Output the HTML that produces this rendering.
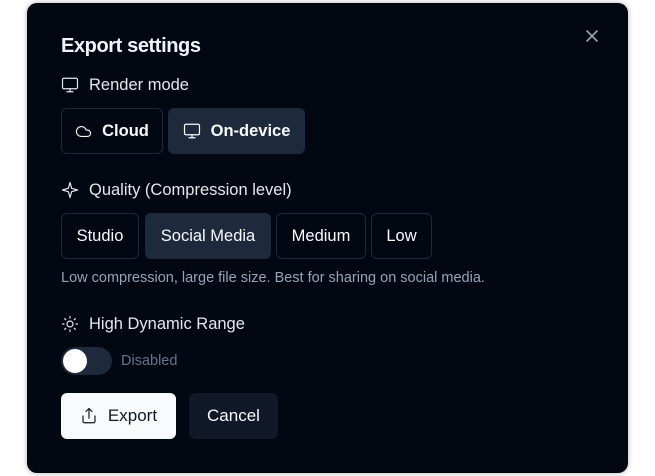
<!DOCTYPE html><html><head><style>
body{margin:0;width:655px;height:476px;background:#fff;font-family:"Liberation Sans",sans-serif;position:relative;overflow:hidden}
.p{position:absolute;left:27px;top:3px;width:601px;height:470px;background:#030712;border-radius:10px;box-shadow:0 0 6px rgba(0,0,0,.3)}
.a{position:absolute}
.t{color:#f1f5f9;font-size:20px;font-weight:bold;letter-spacing:-0.4px}
.l{color:#e5e7eb;font-size:16.5px}
.b{position:absolute;box-sizing:border-box;border:1px solid #1e293b;border-radius:6px;color:#f8fafc;font-size:16.5px;font-weight:bold;display:flex;align-items:center;justify-content:center;gap:10px}
.s{background:#1e293b}
svg{fill:none;stroke:currentColor;stroke-width:1.6;stroke-linecap:round;stroke-linejoin:round}
</style></head><body>
<div class="p"></div>
<div class="a t" style="left:61px;top:35px">Export settings</div>
<svg class="a" style="left:584px;top:28px;color:#9ca3af" width="16" height="16" viewBox="0 0 16 16"><path d="M3 3l10 10M13 3L3 13"/></svg>
<svg class="a" style="left:61px;top:76px;color:#e5e7eb" width="18" height="18" viewBox="0 0 24 24"><rect x="2" y="3" width="20" height="14" rx="2"/><path d="M8 21h8M12 17v4"/></svg>
<div class="a l" style="left:89px;top:76px">Render mode</div>
<div class="b" style="left:61px;top:108px;width:102px;height:46px"><svg width="17" height="17" viewBox="0 0 24 24"><path d="M17.5 19H9a7 7 0 1 1 6.7-9h1.8a4.5 4.5 0 1 1 0 9z"/></svg>Cloud</div>
<div class="b s" style="left:168px;top:108px;width:137px;height:46px"><svg width="18" height="18" viewBox="0 0 24 24"><rect x="2" y="3" width="20" height="14" rx="2"/><path d="M8 21h8M12 17v4"/></svg>On-device</div>
<svg class="a" style="left:61px;top:181px;color:#e5e7eb" width="18" height="18" viewBox="0 0 24 24"><path d="M12 2l2.2 7.8L22 12l-7.8 2.2L12 22l-2.2-7.8L2 12l7.8-2.2z"/></svg>
<div class="a l" style="left:89px;top:181px">Quality (Compression level)</div>
<div class="b" style="left:61px;top:213px;width:78px;height:46px;font-weight:normal">Studio</div>
<div class="b s" style="left:145px;top:213px;width:126px;height:46px;font-weight:normal">Social Media</div>
<div class="b" style="left:276px;top:213px;width:90px;height:46px;font-weight:normal">Medium</div>
<div class="b" style="left:371px;top:213px;width:61px;height:46px;font-weight:normal">Low</div>
<div class="a" style="left:61px;top:270px;color:#94a3b8;font-size:14.5px">Low compression, large file size. Best for sharing on social media.</div>
<svg class="a" style="left:61px;top:315px;color:#e5e7eb" width="18" height="18" viewBox="0 0 24 24"><circle cx="12" cy="12" r="4"/><path d="M12 2v2M12 20v2M4.9 4.9l1.4 1.4M17.7 17.7l1.4 1.4M2 12h2M20 12h2M4.9 19.1l1.4-1.4M17.7 6.3l1.4-1.4"/></svg>
<div class="a l" style="left:89px;top:315px">High Dynamic Range</div>
<div class="a" style="left:61px;top:347px;width:51px;height:28px;border-radius:14px;background:#1e293b"><div style="position:absolute;left:2px;top:2px;width:24px;height:24px;border-radius:50%;background:#fff"></div></div>
<div class="a" style="left:121px;top:353px;color:#64748b;font-size:14.5px">Disabled</div>
<div class="b" style="left:61px;top:393px;width:115px;height:46px;background:#f8fafc;color:#0f172a;border:none"><svg width="18" height="18" viewBox="0 0 24 24"><path d="M4 12v7a2 2 0 0 0 2 2h12a2 2 0 0 0 2-2v-7M16 6l-4-4-4 4M12 2v13"/></svg><span style="font-weight:normal;font-size:17px">Export</span></div>
<div class="b" style="left:189px;top:393px;width:89px;height:46px;background:#111827;border:none;font-weight:normal;font-size:17px">Cancel</div>
</body></html>
